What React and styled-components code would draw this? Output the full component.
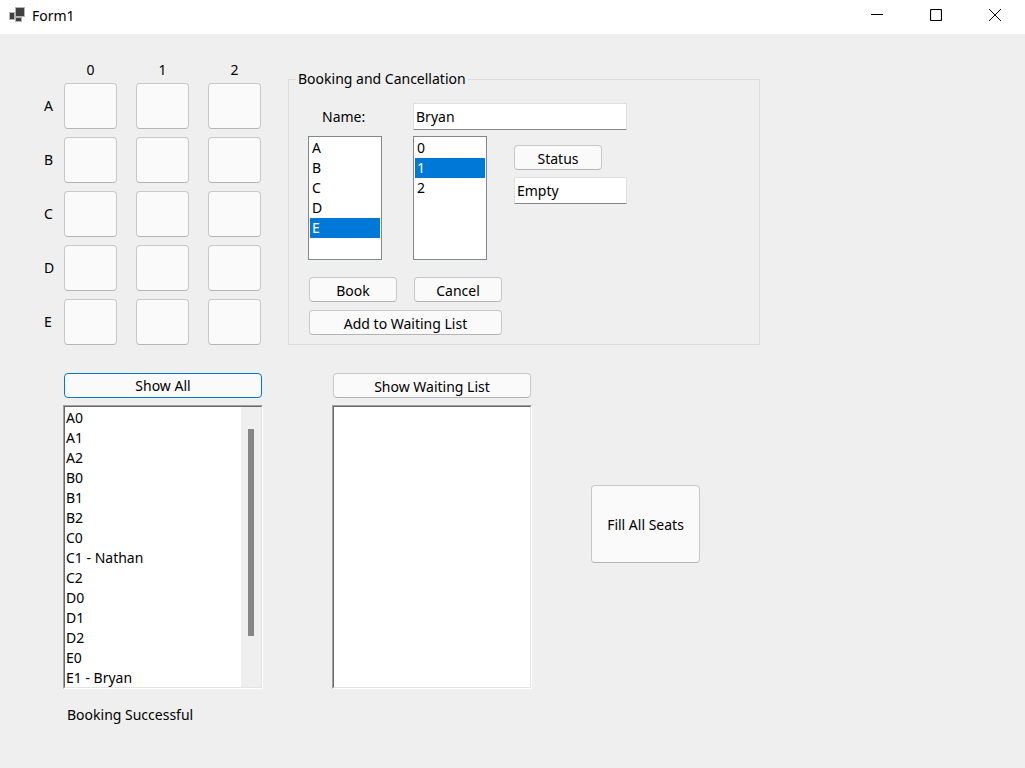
import React from "react";
import styled, { createGlobalStyle } from "styled-components";

const GlobalStyle = createGlobalStyle`
  *, *::before, *::after { box-sizing: border-box; }
  body {
    margin: 0;
    background: #efefef;
    color: #000;
    font: 14px/20px "Noto Sans", "Open Sans", sans-serif;
  }
  button, input, select, textarea { font: inherit; color: inherit; margin: 0; }
`;

const Window = styled.div`
  min-height: 100vh;
  background: #efefef;
`;

const TitleBar = styled.header`
  display: flex;
  align-items: center;
  height: 34px;
  padding: 0 1px 0 9px;
  background: #fff;

  > svg { margin-bottom: 4px; }
`;

const Title = styled.h1`
  flex: 1;
  margin: 0 0 2px 7px;
  font-size: 14px;
  font-weight: 400;
  line-height: 20px;
`;

const CaptionButton = styled.button`
  display: flex;
  align-items: center;
  justify-content: center;
  width: 59px;
  height: 30px;
  margin-bottom: 4px;
  padding: 0;
  border: 0;
  background: transparent;
`;

const Main = styled.main`
  padding: 26px 44px 40px;
`;

const TopRow = styled.div`
  display: flex;
  align-items: flex-start;
  gap: 27px;
`;

const SeatMap = styled.section`
  display: flex;
  flex-direction: column;
  gap: 8px;
`;

const SeatRow = styled.div`
  display: flex;
  align-items: center;
`;

const ColumnHeads = styled(SeatRow)`
  margin-bottom: -5px;
  padding-left: 20px;
  gap: 19px;
`;

const ColumnHead = styled.span`
  width: 53px;
  text-align: center;
`;

const RowHead = styled.span`
  width: 20px;
`;

const Seats = styled.div`
  display: flex;
  gap: 19px;
`;

const Button = styled.button`
  display: block;
  height: ${(p) => p.$height || 25}px;
  width: ${(p) => (p.$width ? `${p.$width}px` : "100%")};
  padding: ${(p) => (p.$active ? "0" : "2px 0 0")};
  border: 1px solid ${(p) => (p.$active ? "#0078d4" : "#c8c8c8")};
  border-bottom-color: ${(p) => (p.$active ? "#0078d4" : "#b4b4b4")};
  border-radius: 4px;
  background: #fafafa;
  line-height: 20px;
  text-align: center;
`;

const Group = styled.fieldset`
  flex: 0 1 472px;
  min-width: 0;
  margin: 9px 0 0;
  padding: 14px 19px 9px;
  border: 1px solid #dcdcdc;
`;

const Legend = styled.legend`
  margin-left: -12px;
  padding: 0 2px;
`;

const NameRow = styled.div`
  display: flex;
  align-items: center;
  margin-bottom: 6px;
`;

const NameLabel = styled.label`
  width: 105px;
  padding-left: 14px;
`;

const TextBox = styled.input`
  width: ${(p) => p.$width}px;
  height: 27px;
  padding: 0 2px;
  border: 1px solid #e0e0e0;
  border-bottom-color: #868686;
  border-radius: 1px;
  background: #fff;
`;

const Pickers = styled.div`
  display: flex;
  margin-bottom: 17px;
`;

const ListBox = styled.select`
  appearance: none;
  width: 74px;
  height: 124px;
  margin-right: 31px;
  padding: 1px;
  overflow: hidden;
  border: 1px solid #828790;
  border-radius: 0;
  background: #fff;
  outline: 0;

  option {
    height: 20px;
    min-height: 20px;
    padding: 0 2px;
    line-height: 20px;
  }

  option:checked {
    background: linear-gradient(#0078d7, #0078d7);
    -webkit-text-fill-color: #fff;
  }
`;

const StatusArea = styled.div`
  display: flex;
  flex-direction: column;
  gap: 7px;
  margin: 9px 0 0 -4px;
`;

const Actions = styled.div`
  display: grid;
  grid-template-columns: 88px 88px;
  gap: 8px 17px;
  padding-left: 1px;
`;

const WideAction = styled.div`
  grid-column: 1 / -1;
`;

const BottomRow = styled.div`
  display: flex;
  align-items: flex-start;
  margin-top: 28px;
  padding-left: 19px;
`;

const ListColumn = styled.section`
  width: 200px;
  margin-right: ${(p) => p.$gap}px;
`;

const ColumnHeader = styled.div`
  padding: 0 1px 7px;
`;

const SunkenFrame = styled.div`
  height: 284px;
  border: 1px solid;
  border-color: #a0a0a0 #fff #fff #a0a0a0;
`;

const SunkenInner = styled.div`
  display: flex;
  height: 100%;
  border: 1px solid;
  border-color: #696969 #e3e3e3 #e3e3e3 #696969;
  background: #fff;
`;

const Output = styled.textarea`
  display: block;
  flex: 1;
  min-width: 0;
  height: 100%;
  padding: 1px 1px 0;
  border: 0;
  outline: 0;
  resize: none;
  overflow: hidden;
  background: #fff;
  line-height: 20px;
`;

const ScrollTrack = styled.div`
  width: 20px;
  padding: 22px 7px 0;
  background: #efefef;
`;

const ScrollThumb = styled.div`
  width: 6px;
  height: 207px;
  background: #868686;
`;

const FillArea = styled.div`
  padding-top: 112px;
`;

const Message = styled.p`
  margin: 16px 0 0 23px;
`;

const rows = ["A", "B", "C", "D", "E"];
const cols = ["0", "1", "2"];
const bookings = { C1: "Nathan", E1: "Bryan" };
const seatList = rows
  .flatMap((r) => cols.map((c) => r + c))
  .map((seat) => (bookings[seat] ? `${seat} - ${bookings[seat]}` : seat))
  .join("\n");

function FormIcon() {
  return (
    <svg width="16" height="16" viewBox="0 0 16 16" aria-hidden="true">
      <path fill="#b4b4b4" d="M6 0h10v10h-3v5H6v-2H0V5h6z" />
      <path fill="#404040" d="M7 1h8v8H7zM1 6h4v6H1zM7 11h5v3H7z" />
    </svg>
  );
}

export default function App() {
  return (
    <Window>
      <GlobalStyle />
      <TitleBar>
        <FormIcon />
        <Title>Form1</Title>
        <CaptionButton aria-label="Minimize">
          <svg width="12" height="12" viewBox="0 0 12 12" stroke="#000">
            <path d="M0 5.500h12" />
          </svg>
        </CaptionButton>
        <CaptionButton aria-label="Maximize">
          <svg width="12" height="12" viewBox="0 0 12 12" stroke="#000" fill="none">
            <rect x="0.500" y="0.500" width="11" height="11" rx="1" strokeWidth="1.200" />
          </svg>
        </CaptionButton>
        <CaptionButton aria-label="Close">
          <svg width="12" height="12" viewBox="0 0 12 12" stroke="#000">
            <path d="M0 0l12 12M12 0L0 12" />
          </svg>
        </CaptionButton>
      </TitleBar>

      <Main>
        <TopRow>
          <SeatMap aria-label="Seats">
            <ColumnHeads>
              {cols.map((c) => (
                <ColumnHead key={c}>{c}</ColumnHead>
              ))}
            </ColumnHeads>
            {rows.map((r) => (
              <SeatRow key={r}>
                <RowHead>{r}</RowHead>
                <Seats>
                  {cols.map((c) => (
                    <Button key={c} $width={53} $height={46} aria-label={`Seat ${r}${c}`} />
                  ))}
                </Seats>
              </SeatRow>
            ))}
          </SeatMap>

          <Group>
            <Legend>Booking and Cancellation</Legend>
            <NameRow>
              <NameLabel htmlFor="name">Name:</NameLabel>
              <TextBox id="name" $width={214} defaultValue="Bryan" />
            </NameRow>
            <Pickers>
              <ListBox size={6} defaultValue="E" aria-label="Row">
                {rows.map((r) => (
                  <option key={r}>{r}</option>
                ))}
              </ListBox>
              <ListBox size={6} defaultValue="1" aria-label="Column">
                {cols.map((c) => (
                  <option key={c}>{c}</option>
                ))}
              </ListBox>
              <StatusArea>
                <Button $width={88}>Status</Button>
                <TextBox $width={113} defaultValue="Empty" aria-label="Seat status" />
              </StatusArea>
            </Pickers>
            <Actions>
              <Button>Book</Button>
              <Button>Cancel</Button>
              <WideAction>
                <Button>Add to Waiting List</Button>
              </WideAction>
            </Actions>
          </Group>
        </TopRow>

        <BottomRow>
          <ListColumn $gap={69}>
            <ColumnHeader>
              <Button $active>Show All</Button>
            </ColumnHeader>
            <SunkenFrame>
              <SunkenInner>
                <Output readOnly value={seatList} aria-label="All seats" />
                <ScrollTrack>
                  <ScrollThumb />
                </ScrollTrack>
              </SunkenInner>
            </SunkenFrame>
          </ListColumn>
          <ListColumn $gap={59}>
            <ColumnHeader>
              <Button>Show Waiting List</Button>
            </ColumnHeader>
            <SunkenFrame>
              <SunkenInner>
                <Output readOnly value="" aria-label="Waiting list" />
              </SunkenInner>
            </SunkenFrame>
          </ListColumn>
          <FillArea>
            <Button $width={109} $height={78}>
              Fill All Seats
            </Button>
          </FillArea>
        </BottomRow>
        <Message role="status">Booking Successful</Message>
      </Main>
    </Window>
  );
}
